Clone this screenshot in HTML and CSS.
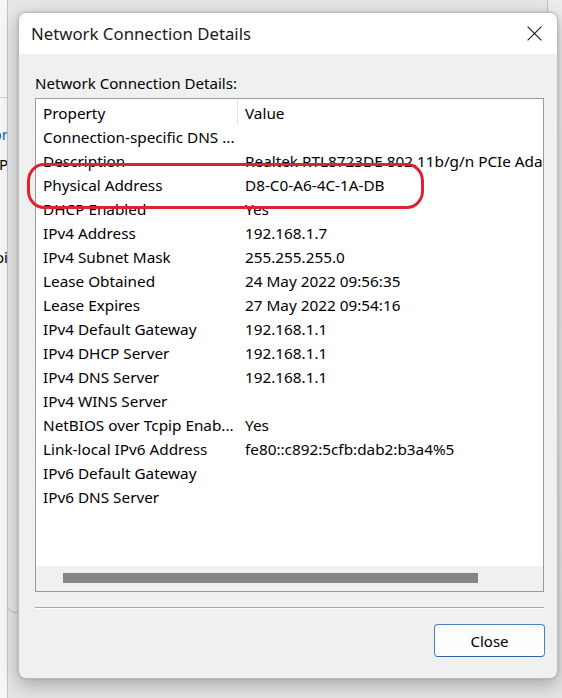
FILE: index.html
```html
<!DOCTYPE html>
<html lang="en">
<head>
<meta charset="utf-8">
<title>Network Connection Details</title>
<link rel="stylesheet" href="styles.css">
</head>
<body>
<div class="desk">
  <div class="win-back">
    <div class="bw-head"></div>
    <div class="bw-line bw-link">Vendor</div>
    <div class="bw-line bw-l2">TCP/IP</div>
    <div class="bw-line bw-l3">Choi</div>
  </div>
  <div class="win-mid"></div>

  <div class="dialog">
    <div class="titlebar">
      <span class="title">Network Connection Details</span>
      <svg class="close-x" width="15" height="15" viewBox="0 0 15 15" aria-hidden="true">
        <path d="M0.6 0.6 L14.4 14.4 M14.4 0.6 L0.6 14.4" stroke="#1c1c1c" stroke-width="1.15" fill="none"/>
      </svg>
    </div>
    <div class="body">
      <div class="label">Network Connection Details:</div>
      <div class="list">
        <div class="head">
          <div class="c1">Property</div>
          <div class="c2">Value</div>
        </div>
        <div class="rows">
          <div class="row"><span class="c1">Connection-specific DNS ...</span><span class="c2"></span></div>
          <div class="row"><span class="c1">Description</span><span class="c2">Realtek RTL8723DE 802.11b/g/n PCIe Adapter</span></div>
          <div class="row"><span class="c1">Physical Address</span><span class="c2">D8-C0-A6-4C-1A-DB</span></div>
          <div class="row"><span class="c1">DHCP Enabled</span><span class="c2">Yes</span></div>
          <div class="row"><span class="c1">IPv4 Address</span><span class="c2">192.168.1.7</span></div>
          <div class="row"><span class="c1">IPv4 Subnet Mask</span><span class="c2">255.255.255.0</span></div>
          <div class="row"><span class="c1">Lease Obtained</span><span class="c2">24 May 2022 09:56:35</span></div>
          <div class="row"><span class="c1">Lease Expires</span><span class="c2">27 May 2022 09:54:16</span></div>
          <div class="row"><span class="c1">IPv4 Default Gateway</span><span class="c2">192.168.1.1</span></div>
          <div class="row"><span class="c1">IPv4 DHCP Server</span><span class="c2">192.168.1.1</span></div>
          <div class="row"><span class="c1">IPv4 DNS Server</span><span class="c2">192.168.1.1</span></div>
          <div class="row"><span class="c1">IPv4 WINS Server</span><span class="c2"></span></div>
          <div class="row"><span class="c1">NetBIOS over Tcpip Enab...</span><span class="c2">Yes</span></div>
          <div class="row"><span class="c1">Link-local IPv6 Address</span><span class="c2">fe80::c892:5cfb:dab2:b3a4%5</span></div>
          <div class="row"><span class="c1">IPv6 Default Gateway</span><span class="c2"></span></div>
          <div class="row"><span class="c1">IPv6 DNS Server</span><span class="c2"></span></div>
        </div>
        <div class="hscroll"><div class="thumb"></div></div>
      </div>
      <div class="sep"></div>
      <div class="actions"><button class="btn">Close</button></div>
    </div>
    <div class="mark"></div>
  </div>
</div>
</body>
</html>
```
FILE: styles.css
```css
* { box-sizing: border-box; }
html, body { margin: 0; padding: 0; }
body {
  width: 562px;
  height: 698px;
  overflow: hidden;
  background: #e9e9e9;
  font-family: "Noto Sans", "Liberation Sans", Arial, sans-serif;
  color: #000;
}
.desk {
  position: relative;
  width: 562px;
  height: 698px;
  overflow: hidden;
  background: linear-gradient(#ededed, #e4e4e4);
}

/* background windows */
.win-back {
  position: absolute;
  left: -300px;
  top: 0;
  width: 308px;
  height: 698px;
  background: #f6f6f6;
  border-right: 1px solid #c6c6c6;
  overflow: hidden;
  font-size: 15px;
  text-align: right;
}
.bw-head {
  height: 98px;
  border-bottom: 1px solid #cfcfcf;
}
.bw-line {
  line-height: 20px;
  height: 20px;
  margin-right: -1px;
  white-space: nowrap;
}
.bw-link { margin-top: 26px; color: #1a5fb4; }
.bw-l2 { margin-top: 10px; }
.bw-l3 { margin-top: 73px; }

.win-mid {
  position: absolute;
  left: 7px;
  top: -10px;
  width: 541px;
  height: 623px;
  background: #e6e6e6;
  border: 1px solid #c2c2c2;
  border-radius: 8px;
}

/* dialog */
.dialog {
  position: absolute;
  left: 18px;
  top: 12px;
  width: 540px;
  height: 667px;
  background: #f0f0f0;
  border: 1px solid #bdbdbd;
  border-radius: 8px;
  box-shadow: 0 6px 18px rgba(0,0,0,0.26), 0 0 3px rgba(0,0,0,0.15);
  display: flex;
  flex-direction: column;
}
.titlebar {
  height: 41px;
  background: #fff;
  border-radius: 7px 7px 0 0;
  display: flex;
  align-items: center;
  justify-content: space-between;
  padding: 0 15px 0 12px;
}
.title {
  font-size: 16.8px;
  line-height: 22px;
  color: #1a1a1a;
}
.close-x { display: block; margin-top: -1px; }

.body {
  flex: 1;
  display: flex;
  flex-direction: column;
  padding: 0 13px 0 16px;
}
.label {
  margin-top: 19px;
  height: 20px;
  line-height: 20px;
  font-size: 15.1px;
}
.list {
  margin-top: 5px;
  height: 494px;
  background: #fff;
  border: 1px solid #9a9a9a;
  display: flex;
  flex-direction: column;
  overflow: hidden;
  font-size: 15.3px;
}
.head {
  height: 26px;
  display: grid;
  grid-template-columns: 202px 1fr;
  align-items: center;
  padding-top: 1px;
}
.head .c1 { border-right: 1px solid #e3e3e3; height: 26px; line-height: 26px; margin-top: -1px; padding-top: 1px; }
.c1 { padding-left: 7px; white-space: nowrap; overflow: hidden; }
.c2 { padding-left: 7px; white-space: nowrap; overflow: hidden; }
.rows {
  flex: 1;
  overflow: hidden;
}
.row {
  height: 24px;
  line-height: 24px;
  display: grid;
  grid-template-columns: 202px 1fr;
}
.hscroll {
  height: 25px;
  background: #f0f0f0;
  padding: 7px 0 0 27px;
}
.thumb {
  width: 415px;
  height: 10px;
  background: #858585;
}
.sep {
  margin-top: 15px;
  height: 2px;
  border-top: 1px solid #a9a9a9;
  border-bottom: 1px solid #ffffff;
}
.actions {
  display: flex;
  justify-content: flex-end;
  margin-top: 15px;
  margin-right: -1px;
}
.btn {
  width: 111px;
  height: 33px;
  background: #fdfdfd;
  border: 1px solid #4a7fc0;
  border-bottom-color: #2f66aa;
  border-radius: 4px;
  font-family: "Noto Sans", "Liberation Sans", Arial, sans-serif;
  font-size: 15px;
  color: #000;
  padding: 0;
}

/* annotation */
.mark {
  position: absolute;
  left: 8px;
  top: 150px;
  width: 397px;
  height: 46px;
  border: 3.5px solid #dc2430;
  border-radius: 17px / 18px;
  pointer-events: none;
}
```
